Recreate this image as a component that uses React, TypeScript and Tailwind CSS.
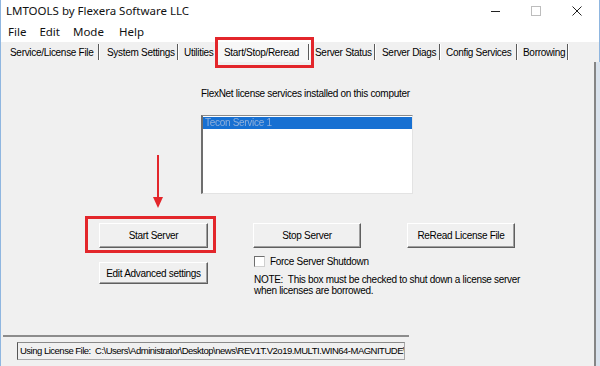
import React from "react";

const tabs = [
  { label: "Service/License File", w: "w-[96px]", pl: "pl-[6px]", sep: true },
  { label: "System Settings", w: "w-[79px]", pl: "pl-[7px]", sep: true },
  { label: "Utilities", w: "w-[36px]", pl: "pl-[5px]", sep: false },
];

const tabsAfter = [
  { label: "Server Status", w: "w-[62px]", pl: "pl-[1px]" },
  { label: "Server Diags", w: "w-[65px]", pl: "pl-[6px]" },
  { label: "Config Services", w: "w-[77px]", pl: "pl-[5px]" },
  { label: "Borrowing", w: "w-[51px]", pl: "pl-[5px]" },
];

function Sep() {
  return (
    <div className="ml-auto flex h-[16px] self-center">
      <div className="w-[1px] h-full bg-[#5a5a5a]" />
      <div className="w-[1px] h-full bg-white" />
    </div>
  );
}

function Btn({ children, className = "" }: { children: React.ReactNode; className?: string }) {
  return (
    <div
      className={`flex items-center justify-center bg-[#f0f0f0] border border-t-white border-l-white border-r-[#5f5f5f] border-b-[#5f5f5f] shadow-[inset_-1px_-1px_0_#a0a0a0] ${className}`}
    >
      {children}
    </div>
  );
}

export default function App() {
  return (
    <div className="w-[600px] h-[366px] overflow-hidden bg-[#f0f0f0] flex flex-col font-['Liberation_Sans',Arial,sans-serif] text-[10px] tracking-[-0.3px] text-black border-l border-[#8fb6e0]">
      {/* Title bar */}
      <div className="h-[22px] bg-white flex items-center border-r border-[#8fb6e0] shrink-0">
        <span className="pl-[5px] text-[11.5px] tracking-normal font-['Noto_Sans',sans-serif] text-[#111]">
          LMTOOLS by Flexera Software LLC
        </span>
        <div className="ml-auto flex items-center h-full">
          <svg width="9" height="10" viewBox="0 0 9 10" className="mr-[31px]">
            <line x1="0" y1="5.5" x2="9" y2="5.5" stroke="#222" strokeWidth="1" />
          </svg>
          <svg width="10" height="10" viewBox="0 0 10 10" className="mr-[31px]">
            <rect x="0.5" y="0.5" width="9" height="9" fill="none" stroke="#bdbdbd" strokeWidth="1" />
          </svg>
          <svg width="10" height="10" viewBox="0 0 10 10" className="mr-[17px]">
            <path d="M0.5 0.5 L9.5 9.5 M9.5 0.5 L0.5 9.5" stroke="#222" strokeWidth="1" />
          </svg>
        </div>
      </div>

      {/* Menu bar */}
      <div className="h-[20px] bg-white flex items-center pl-[7px] gap-[13px] text-[11.5px] tracking-normal font-['Noto_Sans',sans-serif] text-[#111] border-r border-[#8fb6e0] shrink-0">
        <span>File</span>
        <span>Edit</span>
        <span>Mode</span>
        <span className="ml-[2px]">Help</span>
      </div>

      {/* Tab strip */}
      <div className="h-[20px] flex items-stretch pl-[3px] shrink-0 border-r border-[#8fb6e0]">
        {tabs.map((t) => (
          <div key={t.label} className={`flex items-center ${t.w} ${t.pl}`}>
            <span>{t.label}</span>
            {t.sep && <Sep />}
          </div>
        ))}
        <div className="relative flex items-center w-[99px] pl-[9px] pr-[4px] bg-[#f7f7f7]">
          <span>Start/Stop/Reread</span>
          <Sep />
          <div className="absolute left-0 right-0 -top-[5px] -bottom-[6px] border-[3px] border-[#e3262b] pointer-events-none" />
        </div>
        {tabsAfter.map((t) => (
          <div key={t.label} className={`flex items-center ${t.w} ${t.pl}`}>
            <span>{t.label}</span>
            <Sep />
          </div>
        ))}
      </div>

      {/* Content */}
      <div className="flex-1 flex min-h-0">
        <div className="flex-1 relative flex flex-col">
          <div className="pt-[25px] pl-[200px] leading-[13px]">
            FlexNet license services installed on this computer
          </div>

          <div className="ml-[200px] mt-[15px] w-[212px] h-[79px] bg-white border border-l-2 border-t-[#8a8a8a] border-l-[#6e6e6e] border-r-[#e3e3e3] border-b-[#e3e3e3] pt-[1px]">
            <div className="h-[12px] bg-[#1770d2] flex items-center pl-[2px] text-[#8fb0dc] blur-[0.4px] leading-[12px]">
              Tecon Service 1
            </div>
          </div>

          {/* Buttons row */}
          <div className="flex mt-[29px] pl-[98px]">
            <div className="relative">
              <Btn className="w-[109px] h-[25px]">Start Server</Btn>
              <div className="absolute -left-[14px] -right-[8px] -top-[7px] -bottom-[5px] border-[3px] border-[#e3262b] pointer-events-none" />
            </div>
            <Btn className="w-[108px] h-[25px] ml-[45px]">Stop Server</Btn>
            <Btn className="w-[108px] h-[25px] ml-[46px]">ReRead License File</Btn>
          </div>

          {/* Second row */}
          <div className="flex mt-[8px] pl-[98px]">
            <Btn className="w-[109px] h-[22px] mt-[6px] self-start">Edit Advanced settings</Btn>
            <div className="ml-[46px] flex flex-col">
              <div className="flex items-center h-[11px]">
                <div className="w-[11px] h-[11px] bg-white border border-[#6e6e6e] border-r-[#cfcfcf] border-b-[#cfcfcf]" />
                <span className="ml-[5px]">Force Server Shutdown</span>
              </div>
              <div className="mt-[7px] leading-[11px]">
                <div>NOTE:&nbsp; This box must be checked to shut down a license server</div>
                <div>when licenses are borrowed.</div>
              </div>
            </div>
          </div>

          {/* Bottom status */}
          <div className="mt-auto pb-[6px]">
            <div className="ml-[2px] w-[406px] h-[2px] bg-[#8c8c8c]" />
            <div className="ml-[16px] mt-[5px] w-[388px] h-[18px] flex items-center overflow-hidden whitespace-nowrap bg-[#f0f0f0] border border-[#a8a8a8] border-l-[#555] border-t-[#8a8a8a] pl-[2px] text-[9.5px] tracking-[-0.5px]">
              Using License File:&nbsp; C:\Users\Administrator\Desktop\news\REV1T.V2o19.MULTI.WIN64-MAGNITUDE\
            </div>
          </div>

          {/* Annotation arrow */}
          <svg
            width="12"
            height="54"
            viewBox="0 0 12 54"
            className="absolute left-[151px] top-[93px] pointer-events-none"
          >
            <line x1="6" y1="0" x2="6" y2="44" stroke="#e3262b" strokeWidth="2" />
            <path d="M1 42 L11 42 L6 53 Z" fill="#e3262b" />
          </svg>
        </div>
        <div className="w-[2px] bg-[#858585]" />
        <div className="w-[4px] bg-[#d9e2ec]" />
      </div>
    </div>
  );
}
